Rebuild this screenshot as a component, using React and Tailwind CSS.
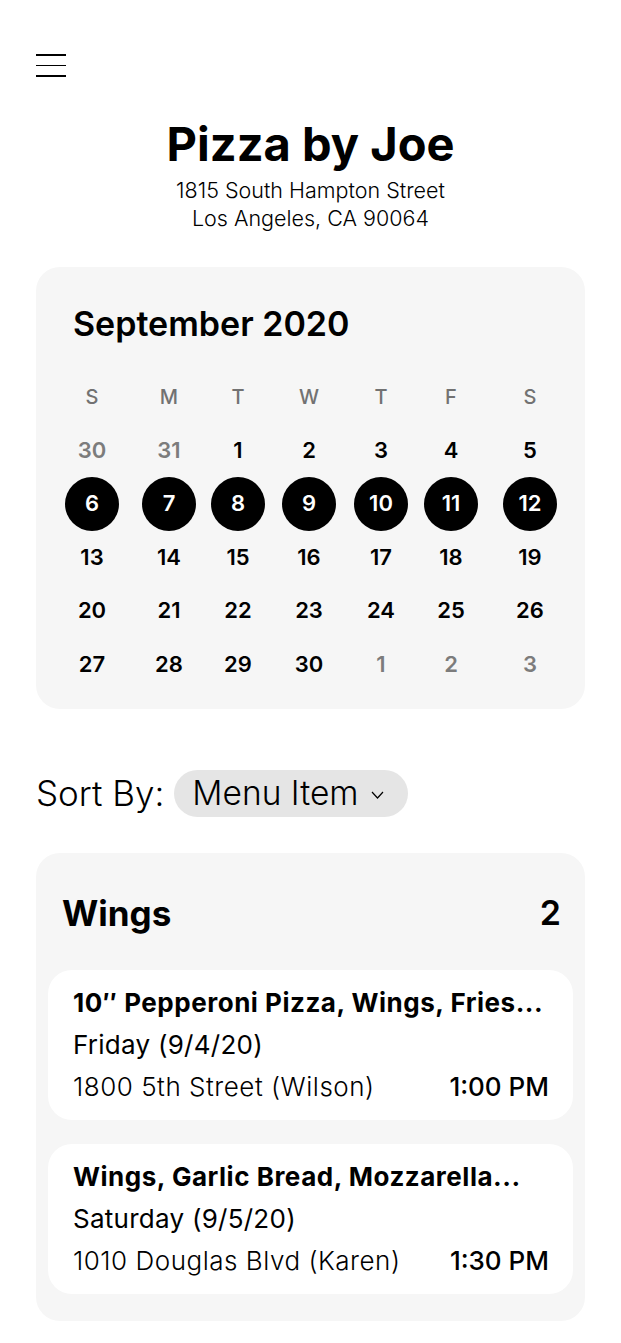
const weekdays = ['S', 'M', 'T', 'W', 'T', 'F', 'S']

const weeks = [
    [{ d: 30, muted: true }, { d: 31, muted: true }, { d: 1 }, { d: 2 }, { d: 3 }, { d: 4 }, { d: 5 }],
    [{ d: 6, on: true }, { d: 7, on: true }, { d: 8, on: true }, { d: 9, on: true }, { d: 10, on: true }, { d: 11, on: true }, { d: 12, on: true }],
    [{ d: 13 }, { d: 14 }, { d: 15 }, { d: 16 }, { d: 17 }, { d: 18 }, { d: 19 }],
    [{ d: 20 }, { d: 21 }, { d: 22 }, { d: 23 }, { d: 24 }, { d: 25 }, { d: 26 }],
    [{ d: 27 }, { d: 28 }, { d: 29 }, { d: 30 }, { d: 1, muted: true }, { d: 2, muted: true }, { d: 3, muted: true }],
]

const orders = [
    {
        id: 1,
        items: '10\u2033 Pepperoni Pizza, Wings, Fries...',
        day: 'Friday (9/4/20)',
        place: '1800 5th Street (Wilson)',
        time: '1:00 PM',
    },
    {
        id: 2,
        items: 'Wings, Garlic Bread, Mozzarella...',
        day: 'Saturday (9/5/20)',
        place: '1010 Douglas Blvd (Karen)',
        time: '1:30 PM',
    },
]

// uneven columns, as in the design
const cols = 'grid grid-cols-[77px_69px_71px_72px_70px_79px_54px] pl-[29px]'

const Calendar = () => (
    <div className="mt-[35px] rounded-[24px] bg-[#f6f6f6] pt-[37px] pb-[18px]">
        <h2 className="pl-[37px] text-[34px] leading-[40px] font-semibold text-black">
            September 2020
        </h2>
        <div className={`${cols} mt-[26px]`}>
            {weekdays.map((w, i) => (
                <div key={i} className="flex h-[54px] w-[54px] items-center justify-center text-[20px] font-medium text-[#727272]">
                    {w}
                </div>
            ))}
        </div>
        {weeks.map((week, wi) => (
            <div key={wi} className={cols}>
                {week.map((day, di) => (
                    <div key={di} className="flex h-[53.5px] w-[54px] items-center justify-center">
                        {day.on ? (
                            <span className="flex h-[54px] w-[54px] items-center justify-center rounded-full bg-black text-[22px] font-semibold text-white">
                                {day.d}
                            </span>
                        ) : (
                            <span className={`text-[22px] font-semibold ${day.muted ? 'text-[#7c7c7c]' : 'text-black'}`}>
                                {day.d}
                            </span>
                        )}
                    </div>
                ))}
            </div>
        ))}
    </div>
)

const OrderCard = ({ order }) => (
    <div className="rounded-[24px] bg-white py-3 pl-[25px] pr-[24px] text-[26px] leading-[42px] text-black">
        <p className="font-bold tracking-[0.02em]">{order.items}</p>
        <p className="tracking-[0.01em]">{order.day}</p>
        <div className="flex items-center justify-between">
            <span className="font-light tracking-[0.02em]">{order.place}</span>
            <span className="font-medium">{order.time}</span>
        </div>
    </div>
)

export default function App() {
    return (
        <div className="min-h-[1343px] bg-white px-9 pt-[54px] pb-6 text-black" style={{ fontFamily: 'Inter, "Noto Sans", sans-serif' }}>
            {/* Menu button */}
            <button className="flex w-[30px] flex-col gap-[9px]">
                <span className="block h-[1.5px] w-[30px] bg-black" />
                <span className="block h-[1.5px] w-[30px] bg-black" />
                <span className="block h-[1.5px] w-[30px] bg-black" />
            </button>

            {/* Restaurant */}
            <div className="mt-[41px] text-center">
                <h1 className="text-[47px] leading-[52px] font-bold">Pizza by Joe</h1>
                <p className="mt-[6px] text-[21.5px] leading-[28px] font-light">1815 South Hampton Street</p>
                <p className="text-[21.5px] leading-[28px] font-light">Los Angeles, CA 90064</p>
            </div>

            <Calendar />

            {/* Sort */}
            <div className="mt-[61px] flex items-center gap-[10px]">
                <span className="text-[35px] leading-[47px] font-light">Sort By:</span>
                <button className="flex h-[47px] items-center gap-[12px] rounded-full bg-[#e5e5e5] pl-[18px] pr-[24px]">
                    <span className="text-[33.5px] font-light">Menu Item</span>
                    <svg width="13" height="8" viewBox="0 0 13 8" fill="none" className="mt-[3px]">
                        <polyline points="1,1 6.5,7 12,1" stroke="black" strokeWidth="1.2" />
                    </svg>
                </button>
            </div>

            {/* Orders */}
            <div className="mt-[36px] rounded-[24px] bg-[#f6f6f6] px-3 pt-[40px] pb-[27px]">
                <div className="flex items-center justify-between pl-[14px] pr-[12px]">
                    <h3 className="text-[35px] leading-[40px] font-bold">Wings</h3>
                    <span className="text-[34px] leading-[40px] font-semibold">2</span>
                </div>
                <div className="mt-[37px] flex flex-col gap-6">
                    {orders.map((o) => (
                        <OrderCard key={o.id} order={o} />
                    ))}
                </div>
            </div>
        </div>
    )
}
